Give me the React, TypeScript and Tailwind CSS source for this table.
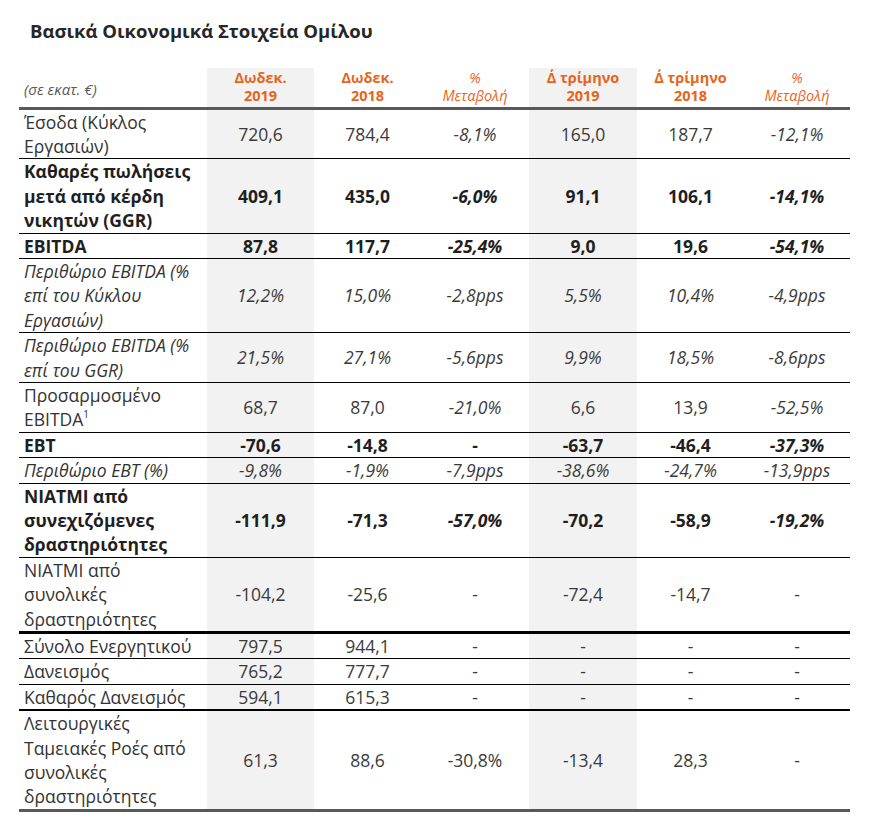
import React from "react";

type Cell = { v: string; i?: boolean; b?: boolean };
type Row = {
  label: React.ReactNode;
  bold?: boolean;
  italic?: boolean;
  cells: Cell[];
  border: string;
  h: string;
};

const thin = "border-b border-black";

const rows: Row[] = [
  {
    label: (
      <>
        Έσοδα (Κύκλος
        <br />
        Εργασιών)
      </>
    ),
    cells: [{ v: "720,6" }, { v: "784,4" }, { v: "-8,1%", i: true }, { v: "165,0" }, { v: "187,7" }, { v: "-12,1%", i: true }],
    border: thin,
    h: "h-[49px]",
  },
  {
    label: (
      <>
        Καθαρές πωλήσεις
        <br />
        μετά από κέρδη
        <br />
        νικητών (GGR)
      </>
    ),
    bold: true,
    cells: [{ v: "409,1" }, { v: "435,0" }, { v: "-6,0%", i: true }, { v: "91,1" }, { v: "106,1" }, { v: "-14,1%", i: true }],
    border: thin,
    h: "h-[73px]",
  },
  {
    label: "EBITDA",
    bold: true,
    cells: [{ v: "87,8" }, { v: "117,7" }, { v: "-25,4%", i: true }, { v: "9,0" }, { v: "19,6" }, { v: "-54,1%", i: true }],
    border: thin,
    h: "h-[24px]",
  },
  {
    label: (
      <>
        Περιθώριο EBITDA (%
        <br />
        επί του Κύκλου
        <br />
        Εργασιών)
      </>
    ),
    italic: true,
    cells: [{ v: "12,2%" }, { v: "15,0%" }, { v: "-2,8pps" }, { v: "5,5%" }, { v: "10,4%" }, { v: "-4,9pps" }],
    border: thin,
    h: "h-[73px]",
  },
  {
    label: (
      <>
        Περιθώριο EBITDA (%
        <br />
        επί του GGR)
      </>
    ),
    italic: true,
    cells: [{ v: "21,5%" }, { v: "27,1%" }, { v: "-5,6pps" }, { v: "9,9%" }, { v: "18,5%" }, { v: "-8,6pps" }],
    border: thin,
    h: "h-[48px]",
  },
  {
    label: (
      <>
        Προσαρμοσμένο
        <br />
        EBITDA<sup className="text-[10px] top-[-0.8em]">1</sup>
      </>
    ),
    cells: [{ v: "68,7" }, { v: "87,0" }, { v: "-21,0%", i: true }, { v: "6,6" }, { v: "13,9" }, { v: "-52,5%", i: true }],
    border: thin,
    h: "h-[49px]",
  },
  {
    label: "EBT",
    bold: true,
    cells: [{ v: "-70,6" }, { v: "-14,8" }, { v: "-" }, { v: "-63,7" }, { v: "-46,4" }, { v: "-37,3%", i: true }],
    border: thin,
    h: "h-[24px]",
  },
  {
    label: "Περιθώριο EBT (%)",
    italic: true,
    cells: [{ v: "-9,8%" }, { v: "-1,9%" }, { v: "-7,9pps" }, { v: "-38,6%" }, { v: "-24,7%" }, { v: "-13,9pps" }],
    border: thin,
    h: "h-[24px]",
  },
  {
    label: (
      <>
        NIATMI από
        <br />
        συνεχιζόμενες
        <br />
        δραστηριότητες
      </>
    ),
    bold: true,
    cells: [{ v: "-111,9" }, { v: "-71,3" }, { v: "-57,0%", i: true }, { v: "-70,2" }, { v: "-58,9" }, { v: "-19,2%", i: true }],
    border: thin,
    h: "h-[74px]",
  },
  {
    label: (
      <>
        NIATMI από
        <br />
        συνολικές
        <br />
        δραστηριότητες
      </>
    ),
    cells: [{ v: "-104,2" }, { v: "-25,6" }, { v: "-" }, { v: "-72,4" }, { v: "-14,7" }, { v: "-" }],
    border: "border-b-[3px] border-black",
    h: "h-[73px]",
  },
  {
    label: "Σύνολο Ενεργητικού",
    cells: [{ v: "797,5" }, { v: "944,1" }, { v: "-" }, { v: "-" }, { v: "-" }, { v: "-" }],
    border: thin,
    h: "h-[23px]",
  },
  {
    label: "Δανεισμός",
    cells: [{ v: "765,2" }, { v: "777,7" }, { v: "-" }, { v: "-" }, { v: "-" }, { v: "-" }],
    border: thin,
    h: "h-[24px]",
  },
  {
    label: "Καθαρός Δανεισμός",
    cells: [{ v: "594,1" }, { v: "615,3" }, { v: "-" }, { v: "-" }, { v: "-" }, { v: "-" }],
    border: "border-b-2 border-black",
    h: "h-[24px]",
  },
  {
    label: (
      <>
        Λειτουργικές
        <br />
        Ταμειακές Ροές από
        <br />
        συνολικές
        <br />
        δραστηριότητες
      </>
    ),
    cells: [{ v: "61,3" }, { v: "88,6" }, { v: "-30,8%" }, { v: "-13,4" }, { v: "28,3" }, { v: "-" }],
    border: "border-b-[3px] border-[#595959]",
    h: "h-[99px]",
  },
];

const widths = ["w-[188px]", "w-[107px]", "w-[107px]", "w-[108px]", "w-[108px]", "w-[107px]", "w-[106px]"];

export default function App() {
  return (
    <div
      className="w-[885px] h-[828px] bg-white text-[#333333]"
      style={{ fontFamily: '"Open Sans", "Noto Sans", sans-serif' }}
    >
      <div className="pt-[17px] pl-[30px] text-[18.5px] leading-[28px] font-bold text-[#262626]">
        Βασικά Οικονομικά Στοιχεία Ομίλου
      </div>
      <table className="ml-[19px] mt-[23px] w-[831px] table-fixed border-collapse">
        <colgroup>
          {widths.map((w, i) => (
            <col key={i} className={w} />
          ))}
        </colgroup>
        <thead>
          <tr className="h-[40px] border-b-[3px] border-[#595959]">
            <th className="pl-[5px] text-left align-middle font-normal italic text-[15px] text-[#595959] pt-[4px]">
              (σε εκατ. €)
            </th>
            <th className="bg-[#f2f2f2] text-center font-bold text-[14.5px] leading-[18px] text-[#e8641b]">
              Δωδεκ.
              <br />
              2019
            </th>
            <th className="text-center font-bold text-[14.5px] leading-[18px] text-[#e8641b]">
              Δωδεκ.
              <br />
              2018
            </th>
            <th className="text-center font-normal italic text-[14.5px] leading-[18px] text-[#e8641b]">
              %
              <br />
              Μεταβολή
            </th>
            <th className="bg-[#f2f2f2] text-center font-bold text-[14.5px] leading-[18px] text-[#e8641b]">
              Δ΄ τρίμηνο
              <br />
              2019
            </th>
            <th className="text-center font-bold text-[14.5px] leading-[18px] text-[#e8641b]">
              Δ΄ τρίμηνο
              <br />
              2018
            </th>
            <th className="text-center font-normal italic text-[14.5px] leading-[18px] text-[#e8641b]">
              %
              <br />
              Μεταβολή
            </th>
          </tr>
        </thead>
        <tbody>
          {rows.map((r, ri) => (
            <tr key={ri} className={`${r.border} ${r.h}`}>
              <td
                className={`pl-[5px] pr-0 text-left align-middle text-[17.5px] leading-[24.4px] whitespace-nowrap ${
                  r.bold ? "font-bold text-[#1f1f1f]" : "font-normal"
                } ${r.italic ? "italic" : ""}`}
              >
                {r.label}
              </td>
              {r.cells.map((c, ci) => (
                <td
                  key={ci}
                  className={`text-center align-middle text-[17.5px] leading-[24.4px] ${
                    ci === 0 || ci === 3 ? "bg-[#f2f2f2]" : ""
                  } ${r.bold ? "font-bold text-[#1f1f1f]" : "font-normal text-[#3a3a3a]"} ${
                    r.italic || c.i ? "italic" : ""
                  }`}
                >
                  {c.v}
                </td>
              ))}
            </tr>
          ))}
        </tbody>
      </table>
    </div>
  );
}
